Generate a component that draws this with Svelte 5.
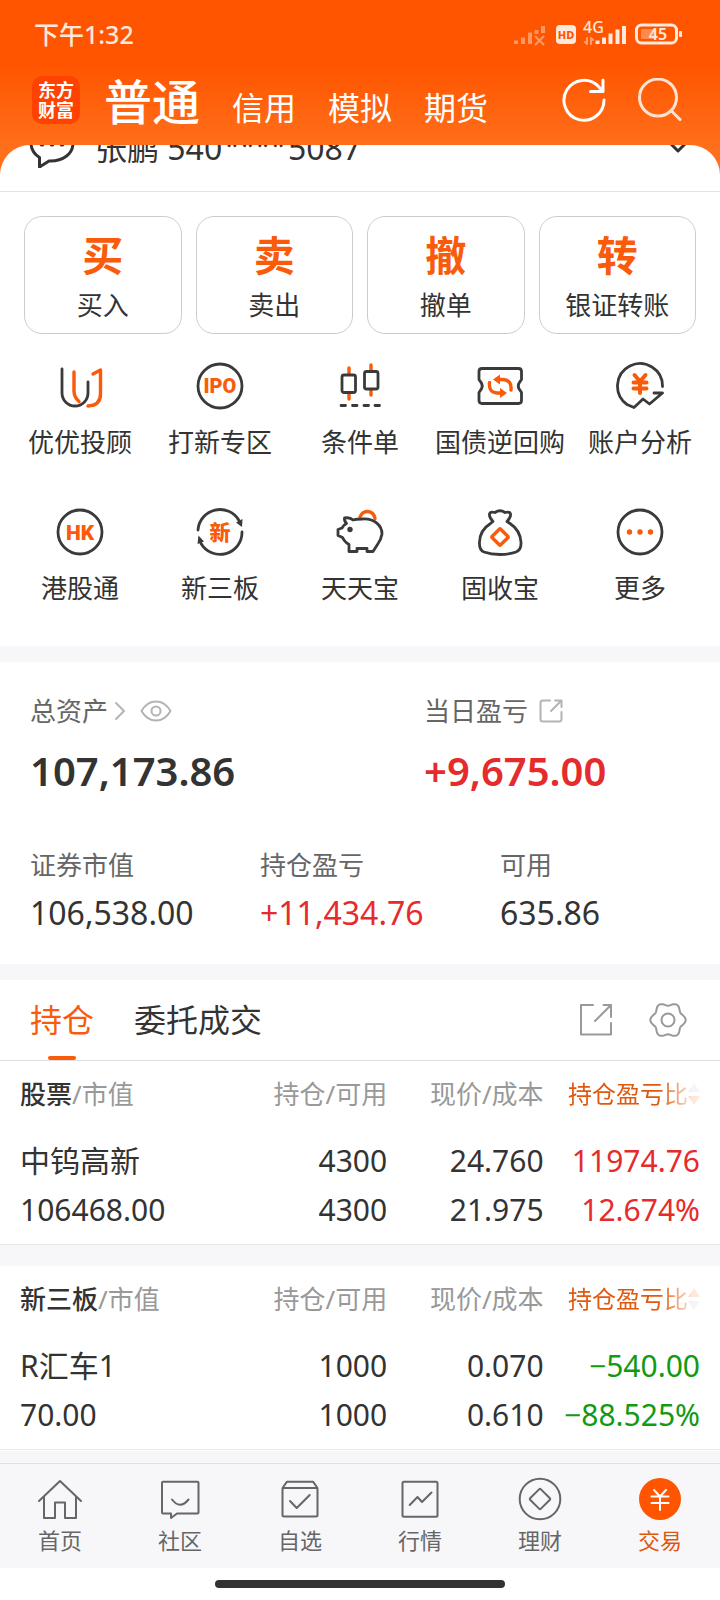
<script lang="ts">
  interface Holding {
    name: string;
    value: string;
    held: string;
    available: string;
    price: string;
    cost: string;
    profit: string;
    ratio: string;
    trend: "up" | "down";
  }

  interface Board {
    id: string;
    label: string;
    sort: "asc" | "desc";
    holdings: Holding[];
  }

  const accountTabs = ["普通", "信用", "模拟", "期货"];
  const actions = [
    { mark: "买", label: "买入" },
    { mark: "卖", label: "卖出" },
    { mark: "撤", label: "撤单" },
    { mark: "转", label: "银证转账" },
  ];
  const shortcuts = [
    { icon: "advisor", label: "优优投顾" },
    { icon: "ipo", label: "打新专区" },
    { icon: "candles", label: "条件单" },
    { icon: "repo", label: "国债逆回购" },
    { icon: "analysis", label: "账户分析" },
    { icon: "hk", label: "港股通" },
    { icon: "neeq", label: "新三板" },
    { icon: "piggy", label: "天天宝" },
    { icon: "bag", label: "固收宝" },
    { icon: "more", label: "更多" },
  ];
  const boards: Board[] = [
    {
      id: "stock", label: "股票", sort: "desc",
      holdings: [{
        name: "中钨高新", value: "106468.00", held: "4300", available: "4300",
        price: "24.760", cost: "21.975", profit: "11974.76", ratio: "12.674%", trend: "up",
      }],
    },
    {
      id: "neeq", label: "新三板", sort: "asc",
      holdings: [{
        name: "R汇车1", value: "70.00", held: "1000", available: "1000",
        price: "0.070", cost: "0.610", profit: "−540.00", ratio: "−88.525%", trend: "down",
      }],
    },
  ];
  const navItems = [
    { icon: "home", label: "首页" },
    { icon: "social", label: "社区" },
    { icon: "watch", label: "自选" },
    { icon: "quotes", label: "行情" },
    { icon: "wealth", label: "理财" },
    { icon: "trade", label: "交易" },
  ];

  let accountTab = $state("普通");
  let listTab = $state("持仓");
  let nav = $state("trade");

  // six soft lobes around the centre of a 40x40 box
  function gearPath(): string {
    const points: string[] = [];
    for (let deg = 0; deg < 360; deg += 5) {
      const a = (deg * Math.PI) / 180;
      const r = 16 + 1.7 * Math.cos(6 * a);
      points.push(`${(20 + r * Math.cos(a)).toFixed(2)} ${(20 + r * Math.sin(a)).toFixed(2)}`);
    }
    return `M${points.join("L")}Z`;
  }
</script>

{#snippet shortcutIcon(name: string)}
  <svg class="shortcut-icon" viewBox="0 0 48 48" aria-hidden="true">
    {#if name === "advisor"}
      <path class="hot thick" d="M18 10V29Q18 35 23 39.500" />
      <path class="ink" d="M6 7V31A13 13 0 0 0 32 31V20" />
      <path class="hot thick" d="M37 12L44.500 8V32Q44.500 43.500 32 44" />
    {:else if name === "ipo"}
      <circle class="ink" cx="24" cy="24" r="22" />
      <text class="badge-text" x="24" y="31" font-size="20">IPO</text>
    {:else if name === "candles"}
      <path class="hot thick" d="M13 6V12M13 32V37M35 3V9M35 28V33" />
      <rect class="ink" x="6" y="13" width="13.500" height="17.500" rx="2" />
      <rect class="ink" x="28.500" y="9.500" width="13.500" height="17.500" rx="2" />
      <path class="ink" d="M5 43.500H9.500M16.500 43.500H21M28 43.500H32.500M39 43.500H43.500" />
    {:else if name === "repo"}
      <path class="ink" d="M6 6.500H42.500Q45.500 6.500 45.500 9.500V17.500L44.500 19Q40 24 44.500 29L45.500 30.500V38.500Q45.500 41.500 42.500 41.500H6Q3 41.500 3 38.500V30.500L4 29Q8.500 24 4 19L3 17.500V9.500Q3 6.500 6 6.500Z" />
      <path class="hot thick" d="M22 17.500H27Q36 18 35 28M26 31H21Q12.500 30.500 13.500 20.500" />
      <path class="hot-fill" d="M17 17.500L24 12.500V22.500ZM31 31L24 26V36Z" />
    {:else if name === "analysis"}
      <path class="ink" d="M46.500 24.500A22.500 22.500 0 1 0 11 42.500L18 45.500L27 37L33.500 42L46.500 31H38" />
      <path class="hot bold" d="M18.500 13L24 19.500L29.500 13M17.500 20.500H30.500M17.500 26.500H30.500M24 20V31" />
    {:else if name === "hk"}
      <circle class="ink" cx="24" cy="24" r="22" />
      <text class="badge-text" x="24" y="31.500" font-size="21">HK</text>
    {:else if name === "neeq"}
      <path class="ink" d="M2 22A22 22 0 0 1 43 12.500L44.500 16M46 24A22 22 0 0 1 5 35.500L3.500 32" />
      <path class="ink-fill" d="M40 14.500L46.500 11L46 19ZM8 33.500L1.500 36L2.500 27.500Z" />
      <text class="badge-text" x="24" y="31.500" font-size="21">新</text>
    {:else if name === "piggy"}
      <path class="hot thick" d="M24 9C27 1.500 37 1.500 39 10.500" />
      <path class="ink" d="M8.500 10Q14 9 17 12Q20 11 26 11C39 10 46 18 46 26Q45 32 41.500 36.500L37 43.500H31V40.500H21V43.500H13V36.500Q8.500 34 6.500 29.500L2 27.500V21.500L6 20Q7.500 17 10.500 15.500Q8 13 8.500 10Z" />
      <circle class="ink-fill" cx="14" cy="21.500" r="2.700" />
    {:else if name === "bag"}
      <path class="ink" d="M17 13.500Q13 9.500 13.500 6Q14 3.500 19 4.500Q24 1 29 4.500Q34 3.500 34.500 6Q35 9.500 31 13.500L34 15.500Q44 22 45 34Q45.500 42 40 44Q33 46.500 24 46.500Q15 46.500 8 44Q3 42 3.500 34Q4 22 14.500 15.500Z" />
      <rect class="hot thick" x="18" y="23" width="12" height="12" rx="1" transform="rotate(45 24 29)" />
    {:else if name === "more"}
      <circle class="ink" cx="24" cy="24" r="22" />
      <circle class="hot-fill" cx="13.500" cy="24" r="2.700" />
      <circle class="hot-fill" cx="24" cy="24" r="2.700" />
      <circle class="hot-fill" cx="34.500" cy="24" r="2.700" />
    {/if}
  </svg>
{/snippet}

{#snippet navIcon(name: string)}
  <svg class="nav-icon" viewBox="0 0 44 44" aria-hidden="true">
    {#if name === "home"}
      <path d="M1 24L22 4L43 24M6 20V41H17V25.500H27V41H38V20" />
    {:else if name === "social"}
      <path d="M5 4.700H39.500Q40.500 4.700 40.500 5.700V35.500Q40.500 36.500 39.500 36.500H19L13 41V36.500H5Q4 36.500 4 35.500V5.700Q4 4.700 5 4.700ZM14 22.500Q22 33 30.500 22.500" />
    {:else if name === "watch"}
      <rect x="4.500" y="11" width="35" height="28.500" rx="1.500" />
      <path d="M4.500 11L9 4.700H35L39.500 11M12 24L18.700 31L31.700 18" />
    {:else if name === "quotes"}
      <rect x="4.500" y="4.700" width="35" height="35" rx="1.500" />
      <path d="M11.700 28L19.500 20L24 25L33.500 15.500" />
    {:else if name === "wealth"}
      <circle cx="22" cy="22" r="20.300" />
      <rect x="14.500" y="14.500" width="15" height="15" rx="1" transform="rotate(45 22 22)" />
    {:else if name === "trade"}
      <circle class="coin" cx="22" cy="22" r="21" />
      <path class="coin-mark" d="M16 13L22 19.500L28 13M13.500 19.500H30.500M13.500 26H30.500M22 19.500V33" />
    {/if}
  </svg>
{/snippet}

<div class="app">
  <header>
    <div class="status">
      <span>下午1:32</span>
      <svg class="status-icons" width="172" height="36" viewBox="0 -4 172 36" aria-hidden="true">
        <g opacity=".45">
          <path class="bar" d="M4 24V20.500M11 24V17.500M18 24V12.500" />
          <path class="bar" d="M24.500 14V10M31 13V6" />
          <path class="cross" d="M23.500 16.500L31.500 24.500M31.500 16.500L23.500 24.500" />
        </g>
        <rect class="pale" x="44" y="5" width="20" height="19" rx="4" />
        <text class="hd" x="54" y="18.500">HD</text>
        <text class="net" x="71" y="13">4G</text>
        <path class="cross" opacity=".5" d="M75 18V24L73 22M79 24V18L81 20" />
        <path class="bar" d="M85.500 24V20.500M92 24V17.500M98.500 24V13.500M105.500 24V9.500M112 24V6" />
        <rect class="shell" x="124.500" y="5" width="40" height="18" rx="5" />
        <rect class="charge" x="129" y="9" width="14" height="10" rx="1" />
        <rect class="pale" x="167" y="11" width="3" height="6" rx="1" />
        <text class="level" x="146" y="19.500">45</text>
      </svg>
    </div>
    <div class="topbar">
      <div class="logo"><span>东方</span><span>财富</span></div>
      <nav class="account-tabs">
        {#each accountTabs as tab (tab)}
          <button class:active={accountTab === tab} onclick={() => (accountTab = tab)}>{tab}</button>
        {/each}
      </nav>
      <button class="icon-button" aria-label="刷新">
        <svg width="44" height="44" viewBox="0 0 44 44"><path d="M42 22A20 20 0 1 1 36.500 8.500L40 12.500M41 2V13.500H28.500" /></svg>
      </button>
      <button class="icon-button search" aria-label="搜索">
        <svg width="44" height="44" viewBox="0 0 44 44"><circle cx="20" cy="19.500" r="18.500" /><path d="M33 32.500L42 41.500" /></svg>
      </button>
    </div>
  </header>

  <main>
    <section class="sheet">
      <button class="account">
        <svg width="46" height="46" viewBox="0 0 46 46" aria-hidden="true">
          <path d="M10.500 45V35.500Q2 30 2 21C2 10 11 3 23 3S44 10 44 21S34 39.500 20 39Z" />
          <path class="dots" d="M13 22V22M23 22V22M33 22V22" />
        </svg>
        <span class="owner">张鹏 540<span class="masked">****</span>5087</span>
        <svg width="18" height="18" viewBox="0 0 18 18" aria-hidden="true"><path d="M2 8L9 15L16 8" /></svg>
      </button>

      <div class="actions">
        {#each actions as action (action.label)}
          <button class="action">
            <span class="action-mark">{action.mark}</span>
            <span>{action.label}</span>
          </button>
        {/each}
      </div>

      <div class="shortcuts">
        {#each shortcuts as item (item.icon)}
          <button class="shortcut">
            {@render shortcutIcon(item.icon)}
            <span>{item.label}</span>
          </button>
        {/each}
      </div>
    </section>

    <section class="assets">
      <div class="totals">
        <div>
          <div class="label">
            <span>总资产</span>
            <svg class="go" width="12" height="20" viewBox="0 0 12 20" aria-hidden="true"><path d="M2 2L10 10L2 18" /></svg>
            <button class="eye" aria-label="隐藏资产">
              <svg width="32" height="24" viewBox="0 0 32 24"><path d="M1.500 12Q7 2.500 16 2.500T30.500 12Q25 21.500 16 21.500T1.500 12Z" /><circle cx="16" cy="12" r="4.500" /></svg>
            </button>
          </div>
          <div class="total">107,173.86</div>
        </div>
        <div>
          <div class="label">
            <span>当日盈亏</span>
            <button class="share" aria-label="分享盈亏">
              <svg width="24" height="24" viewBox="0 0 24 24"><path d="M11 1.500H4Q1.500 1.500 1.500 4V20Q1.500 22.500 4 22.500H20Q22.500 22.500 22.500 20V13M12 12L22 2M16 1.500H22.500V8" /></svg>
            </button>
          </div>
          <div class="total up">+9,675.00</div>
        </div>
      </div>
      <div class="breakdown">
        <div><div class="label">证券市值</div><div class="amount">106,538.00</div></div>
        <div><div class="label">持仓盈亏</div><div class="amount up">+11,434.76</div></div>
        <div><div class="label">可用</div><div class="amount">635.86</div></div>
      </div>
    </section>

    <section>
      <div class="list-tabs">
        {#each ["持仓", "委托成交"] as tab (tab)}
          <button class="list-tab" class:active={listTab === tab} onclick={() => (listTab = tab)}>{tab}</button>
        {/each}
        <button class="tool first" aria-label="导出">
          <svg width="40" height="40" viewBox="0 0 40 40"><path d="M17 5H5V34.500H35V23M19 21L34.500 5.500M27.500 5H35V17" /></svg>
        </button>
        <button class="tool" aria-label="设置">
          <svg width="40" height="40" viewBox="0 0 40 40"><path d={gearPath()} /><circle cx="20" cy="20" r="6.500" /></svg>
        </button>
      </div>

      {#each boards as board (board.id)}
        <div class="board">
          <table>
            <thead>
              <tr>
                <th><strong>{board.label}</strong>/市值</th>
                <th>持仓/可用</th>
                <th>现价/成本</th>
                <th>
                  <button class="sort">
                    持仓盈亏比
                    <svg width="12" height="24" viewBox="0 0 12 24" aria-hidden="true">
                      <path class:on={board.sort === "asc"} d="M6 1L12 10H0Z" />
                      <path class:on={board.sort === "desc"} d="M6 23L12 14H0Z" />
                    </svg>
                  </button>
                </th>
              </tr>
            </thead>
            <tbody>
              {#each board.holdings as h (h.name)}
                <tr>
                  <td>{h.name}<br />{h.value}</td>
                  <td>{h.held}<br />{h.available}</td>
                  <td>{h.price}<br />{h.cost}</td>
                  <td class={h.trend}>{h.profit}<br />{h.ratio}</td>
                </tr>
              {/each}
            </tbody>
          </table>
        </div>
      {/each}
    </section>
  </main>

  <nav class="bottom-nav">
    {#each navItems as item (item.icon)}
      <button class:active={nav === item.icon} onclick={() => (nav = item.icon)}>
        {@render navIcon(item.icon)}
        <span>{item.label}</span>
      </button>
    {/each}
  </nav>
  <div class="home-area"><div class="home-bar"></div></div>
</div>

<style>
  :global(body) { background: #fff; }
  .app {
    min-height: 100vh; display: flex; flex-direction: column;
    font-family: "Noto Sans", "Noto Sans CJK SC", sans-serif;
    font-size: 26px; line-height: 36px; color: #333; background: #fff;
  }
  button {
    font: inherit; color: inherit; background: none; border: none;
    padding: 0; margin: 0; cursor: pointer; white-space: nowrap;
  }
  svg { display: block; flex-shrink: 0; fill: none; stroke-linecap: round; stroke-linejoin: round; }
  .up { color: #e52b2b; }
  .down { color: #129a12; }

  header {
    padding-bottom: 54px;
    background: linear-gradient(#ff5500 64px, #ff701c 150px);
  }
  .status {
    height: 68px; padding: 0 36px 0 34px; display: flex; align-items: center;
    justify-content: space-between; font-size: 25px; font-weight: 500; color: #ffe9dc;
  }
  .bar { stroke: #ffe9dc; stroke-width: 4; stroke-linecap: butt; }
  .cross { stroke: #ffe9dc; stroke-width: 2; }
  .pale { fill: #ffe9dc; }
  .shell { stroke: #ffe9dc; stroke-width: 3; }
  .charge { fill: #ff8a4d; }
  .hd { fill: #ff5500; font-size: 11px; font-weight: 800; text-anchor: middle; }
  .net { fill: #ffe9dc; font-size: 16px; font-weight: 500; }
  .level { fill: #ffe9dc; font-size: 16px; font-weight: 600; text-anchor: middle; }

  .topbar { height: 64px; padding: 0 38px 0 32px; display: flex; align-items: center; color: #fff; }
  .logo {
    width: 48px; height: 48px; border-radius: 10px; background: #ff4200;
    display: flex; flex-direction: column; align-items: center; justify-content: center;
    font-size: 18px; line-height: 20px; font-weight: 700;
  }
  .account-tabs { flex: 1; display: flex; align-items: baseline; gap: 32px; margin-left: 24px; padding-top: 10px; }
  .account-tabs button { font-size: 32px; line-height: 56px; }
  .account-tabs .active { font-size: 48px; font-weight: 500; }
  .icon-button svg { stroke: #fff; stroke-width: 3; }
  .icon-button.search { margin-left: 32px; }
  .icon-button.search svg { stroke: #ffe3d3; }

  main { margin-top: -41px; }
  main > section { background: #fff; border-bottom: 16px solid #f7f7fa; }
  main > section:last-child { border-bottom: none; }

  .sheet { border-radius: 30px 30px 0 0; overflow: hidden; padding-bottom: 38px; }
  /* the row is scrolled half way under the header */
  .account {
    width: 100%; height: 93px; margin-top: -46px; padding: 0 33px 0 29px;
    display: flex; align-items: center; border-bottom: 1px solid #e3e3e3; font-size: 32px;
  }
  .account svg { stroke: #333; stroke-width: 3; }
  .account .dots { stroke-width: 5; }
  .owner { flex: 1; margin-left: 20px; padding-top: 6px; text-align: left; }
  .masked { padding: 0 2px; font-size: 28px; line-height: 1; vertical-align: 4px; }

  .actions { display: grid; grid-template-columns: repeat(4, 1fr); gap: 14px; padding: 24px 24px 0; }
  .action {
    height: 118px; padding: 12px 0 10px; border: 1px solid #ccc; border-radius: 18px;
    display: flex; flex-direction: column; align-items: center; justify-content: space-between;
  }
  .action-mark { font-size: 41px; line-height: 52px; font-weight: 700; color: #f95b0b; }

  .shortcuts { display: grid; grid-template-columns: repeat(5, 1fr); row-gap: 48px; padding: 28px 10px 2px; }
  .shortcut { height: 98px; display: flex; flex-direction: column; align-items: center; justify-content: space-between; }
  .shortcut-icon { width: 48px; height: 48px; }
  .ink { stroke: #3a3a3a; stroke-width: 2.8; }
  .ink-fill { fill: #3a3a3a; }
  .hot { stroke: #f95b0b; }
  .thick { stroke-width: 3.4; }
  .bold { stroke-width: 4; }
  .hot-fill { fill: #f95b0b; }
  .badge-text { fill: #f95b0b; font-family: Roboto, "Noto Sans CJK SC", sans-serif; font-weight: 900; text-anchor: middle; }

  .assets { padding: 31px 30px 29px; }
  .label { display: flex; align-items: center; color: #666; }
  .label svg { stroke: #b4b4b4; stroke-width: 2; }
  .go { margin-left: 6px; }
  .eye { margin-left: 14px; }
  .share { margin-left: 11px; }
  .totals { display: grid; grid-template-columns: 394fr 266fr; }
  .total { margin-top: 14px; font-size: 40px; line-height: 56px; font-weight: 600; }
  .breakdown { display: grid; grid-template-columns: 23fr 24fr 19fr; margin-top: 48px; }
  .amount { margin-top: 8px; font-size: 32px; line-height: 44px; }

  .list-tabs { height: 80px; display: flex; align-items: center; padding: 0 32px 0 30px; border-bottom: 1px solid #ddd; }
  .list-tab { position: relative; height: 80px; margin-right: 40px; font-size: 32px; }
  .list-tab.active { color: #f95b0b; }
  .list-tab.active::after {
    content: ""; position: absolute; bottom: 0; left: calc(50% - 14px);
    width: 28px; height: 4px; border-radius: 2px; background: #f95b0b;
  }
  .tool svg { stroke: #999; stroke-width: 2; }
  .tool.first { margin-left: auto; margin-right: 32px; }

  .board { padding: 0 20px 10px; border-bottom: 1px solid #e8e8ea; }
  .board + .board { border-top: 21px solid #f7f7fa; }
  table { width: 100%; table-layout: fixed; border-collapse: collapse; }
  th, td { padding: 0; text-align: right; white-space: nowrap; }
  th { height: 66px; font-weight: 400; color: #999; }
  th:first-child, td:first-child { width: 34%; text-align: left; }
  th:nth-child(2) { width: 20%; }
  th strong { font-weight: 500; color: #333; }
  td { padding-top: 9px; font-size: 30px; line-height: 49px; }
  .sort {
    display: inline-flex; align-items: center; font-size: 24px; color: #e0590f; vertical-align: bottom;
    mask-image: linear-gradient(to right, #000 68%, rgb(0 0 0 / 15%) 94%);
  }
  .sort path { fill: #bbb; }
  .sort .on { fill: #f95b0b; }

  .bottom-nav {
    margin-top: auto; display: grid; grid-template-columns: repeat(6, 1fr);
    background: #f7f7fa; border-top: 1px solid #e0e0e3; height: 104px;
    box-shadow: 0 -12px #f7f7fa; font-size: 22px; line-height: 30px; color: #666;
  }
  .bottom-nav button { display: flex; flex-direction: column; align-items: center; padding-top: 13px; gap: 4px; }
  .bottom-nav .active { color: #e0560c; }
  .nav-icon { width: 44px; height: 44px; stroke: #666; stroke-width: 2; }
  .coin { fill: #ff5500; stroke: none; }
  .coin-mark { stroke: #fff; }
  .home-area { height: 32px; display: flex; align-items: center; justify-content: center; }
  .home-bar { width: 290px; height: 8px; border-radius: 4px; background: #333; }
</style>
